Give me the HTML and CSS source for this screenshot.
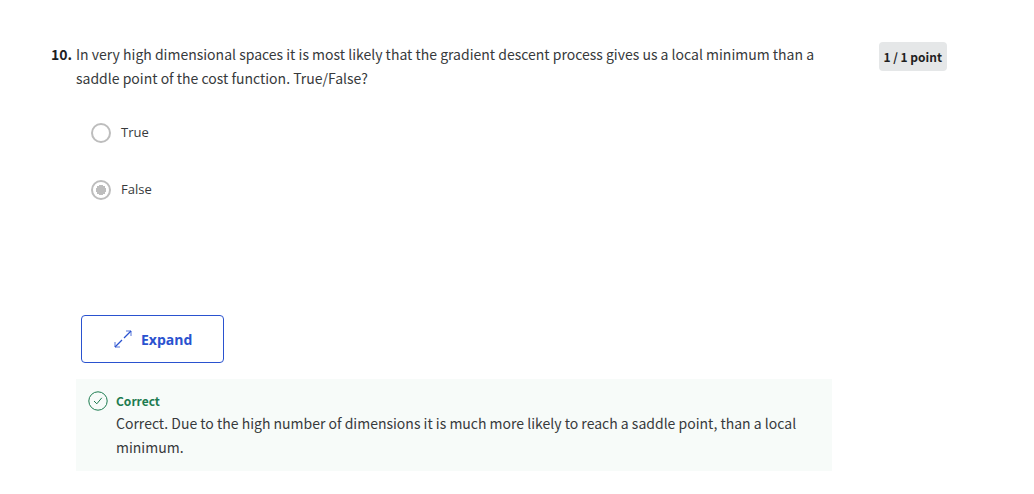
FILE: index.html
```html
<!DOCTYPE html>
<html lang="en">
<head>
<meta charset="utf-8">
<meta name="viewport" content="width=device-width, initial-scale=1">
<title>Question 10</title>
<link rel="stylesheet" href="styles.css">
</head>
<body>
<main class="question">
  <span class="number">10.</span>
  <div class="body">
    <p class="prompt" id="prompt">In very high dimensional spaces it is most likely that the gradient descent process gives us a local minimum than a saddle point of the cost function. True/False?</p>
    <div class="options" role="radiogroup" aria-labelledby="prompt">
      <label class="option"><input class="radio" type="radio" name="answer"><span>True</span></label>
      <label class="option"><input class="radio" type="radio" name="answer" checked><span>False</span></label>
    </div>
    <button class="expand" type="button">
      <svg class="expand-icon" viewBox="0 0 18 18" aria-hidden="true"><path d="M10 8 17 1M8 10 1 17" stroke-width="1.300"/><path d="M12 1h5v5M1 12v5h5" opacity=".8"/></svg>
      <span>Expand</span>
    </button>
    <section class="feedback">
      <svg class="check-icon" viewBox="0 0 20 20" aria-hidden="true"><circle cx="10" cy="10" r="9.200"/><path d="m6 10 2.800 2.800 5-6"/></svg>
      <div>
        <h2 class="verdict">Correct</h2>
        <p class="explanation">Correct. Due to the high number of dimensions it is much more likely to reach a saddle point, than a local minimum.</p>
      </div>
    </section>
  </div>
  <span class="points">1 / 1 point</span>
</main>
</body>
</html>
```
FILE: styles.css
```css
* { box-sizing: border-box; }
body {
  margin: 0;
  background: #fff;
  color: #373a3c;
  font-family: "Noto Sans CJK SC", "Open Sans", sans-serif;
  font-size: 14px;
  line-height: 24px;
}
p, h2 { margin: 0; }
.question {
  display: grid;
  grid-template-columns: 25px minmax(0, 1fr) auto;
  align-items: start;
  padding: 42px 87px 24px 51px;
}
.number { font-weight: 700; color: #1f1f1f; }
.body { margin-right: 47px; }
.options {
  display: grid;
  gap: 32px;
  padding: 30px 15px 0;
}
.option {
  display: flex;
  align-items: end;
  gap: 10px;
  min-height: 25px;
  font-family: "Open Sans", sans-serif;
  font-size: 13px;
}
.option span { align-self: start; }
.radio {
  appearance: none;
  width: 20px;
  height: 20px;
  margin: 0 0 2px;
  border: 2px solid #bdbdbd;
  border-radius: 50%;
}
.radio:checked {
  background: radial-gradient(circle, #bdbdbd 5px, transparent 5px);
}
.expand {
  display: flex;
  align-items: center;
  justify-content: center;
  gap: 9px;
  height: 48px;
  margin: 113px 0 16px 5px;
  padding: 0 31px 0 32px;
  border: 1px solid #2a52cf;
  border-radius: 4px;
  background: #fff;
  color: #2a52cf;
  font: 700 14px/24px "Open Sans", sans-serif;
}
.expand span { padding-top: 2px; }
.expand-icon {
  width: 18px;
  height: 18px;
  fill: none;
  stroke: currentColor;
}
.feedback {
  display: flex;
  align-items: start;
  gap: 8px;
  padding: 12px;
  background: #f7fbf9;
}
.check-icon {
  flex: none;
  width: 20px;
  height: 20px;
  fill: none;
  stroke: #1d7c50;
}
.verdict {
  font-size: 12px;
  line-height: 20px;
  color: #1d7c50;
}
.points {
  padding: 3px 5px 2px 4px;
  border-radius: 4px;
  background: #e5e7e8;
  color: #1f1f1f;
  font-size: 12px;
  font-weight: 700;
}
```
